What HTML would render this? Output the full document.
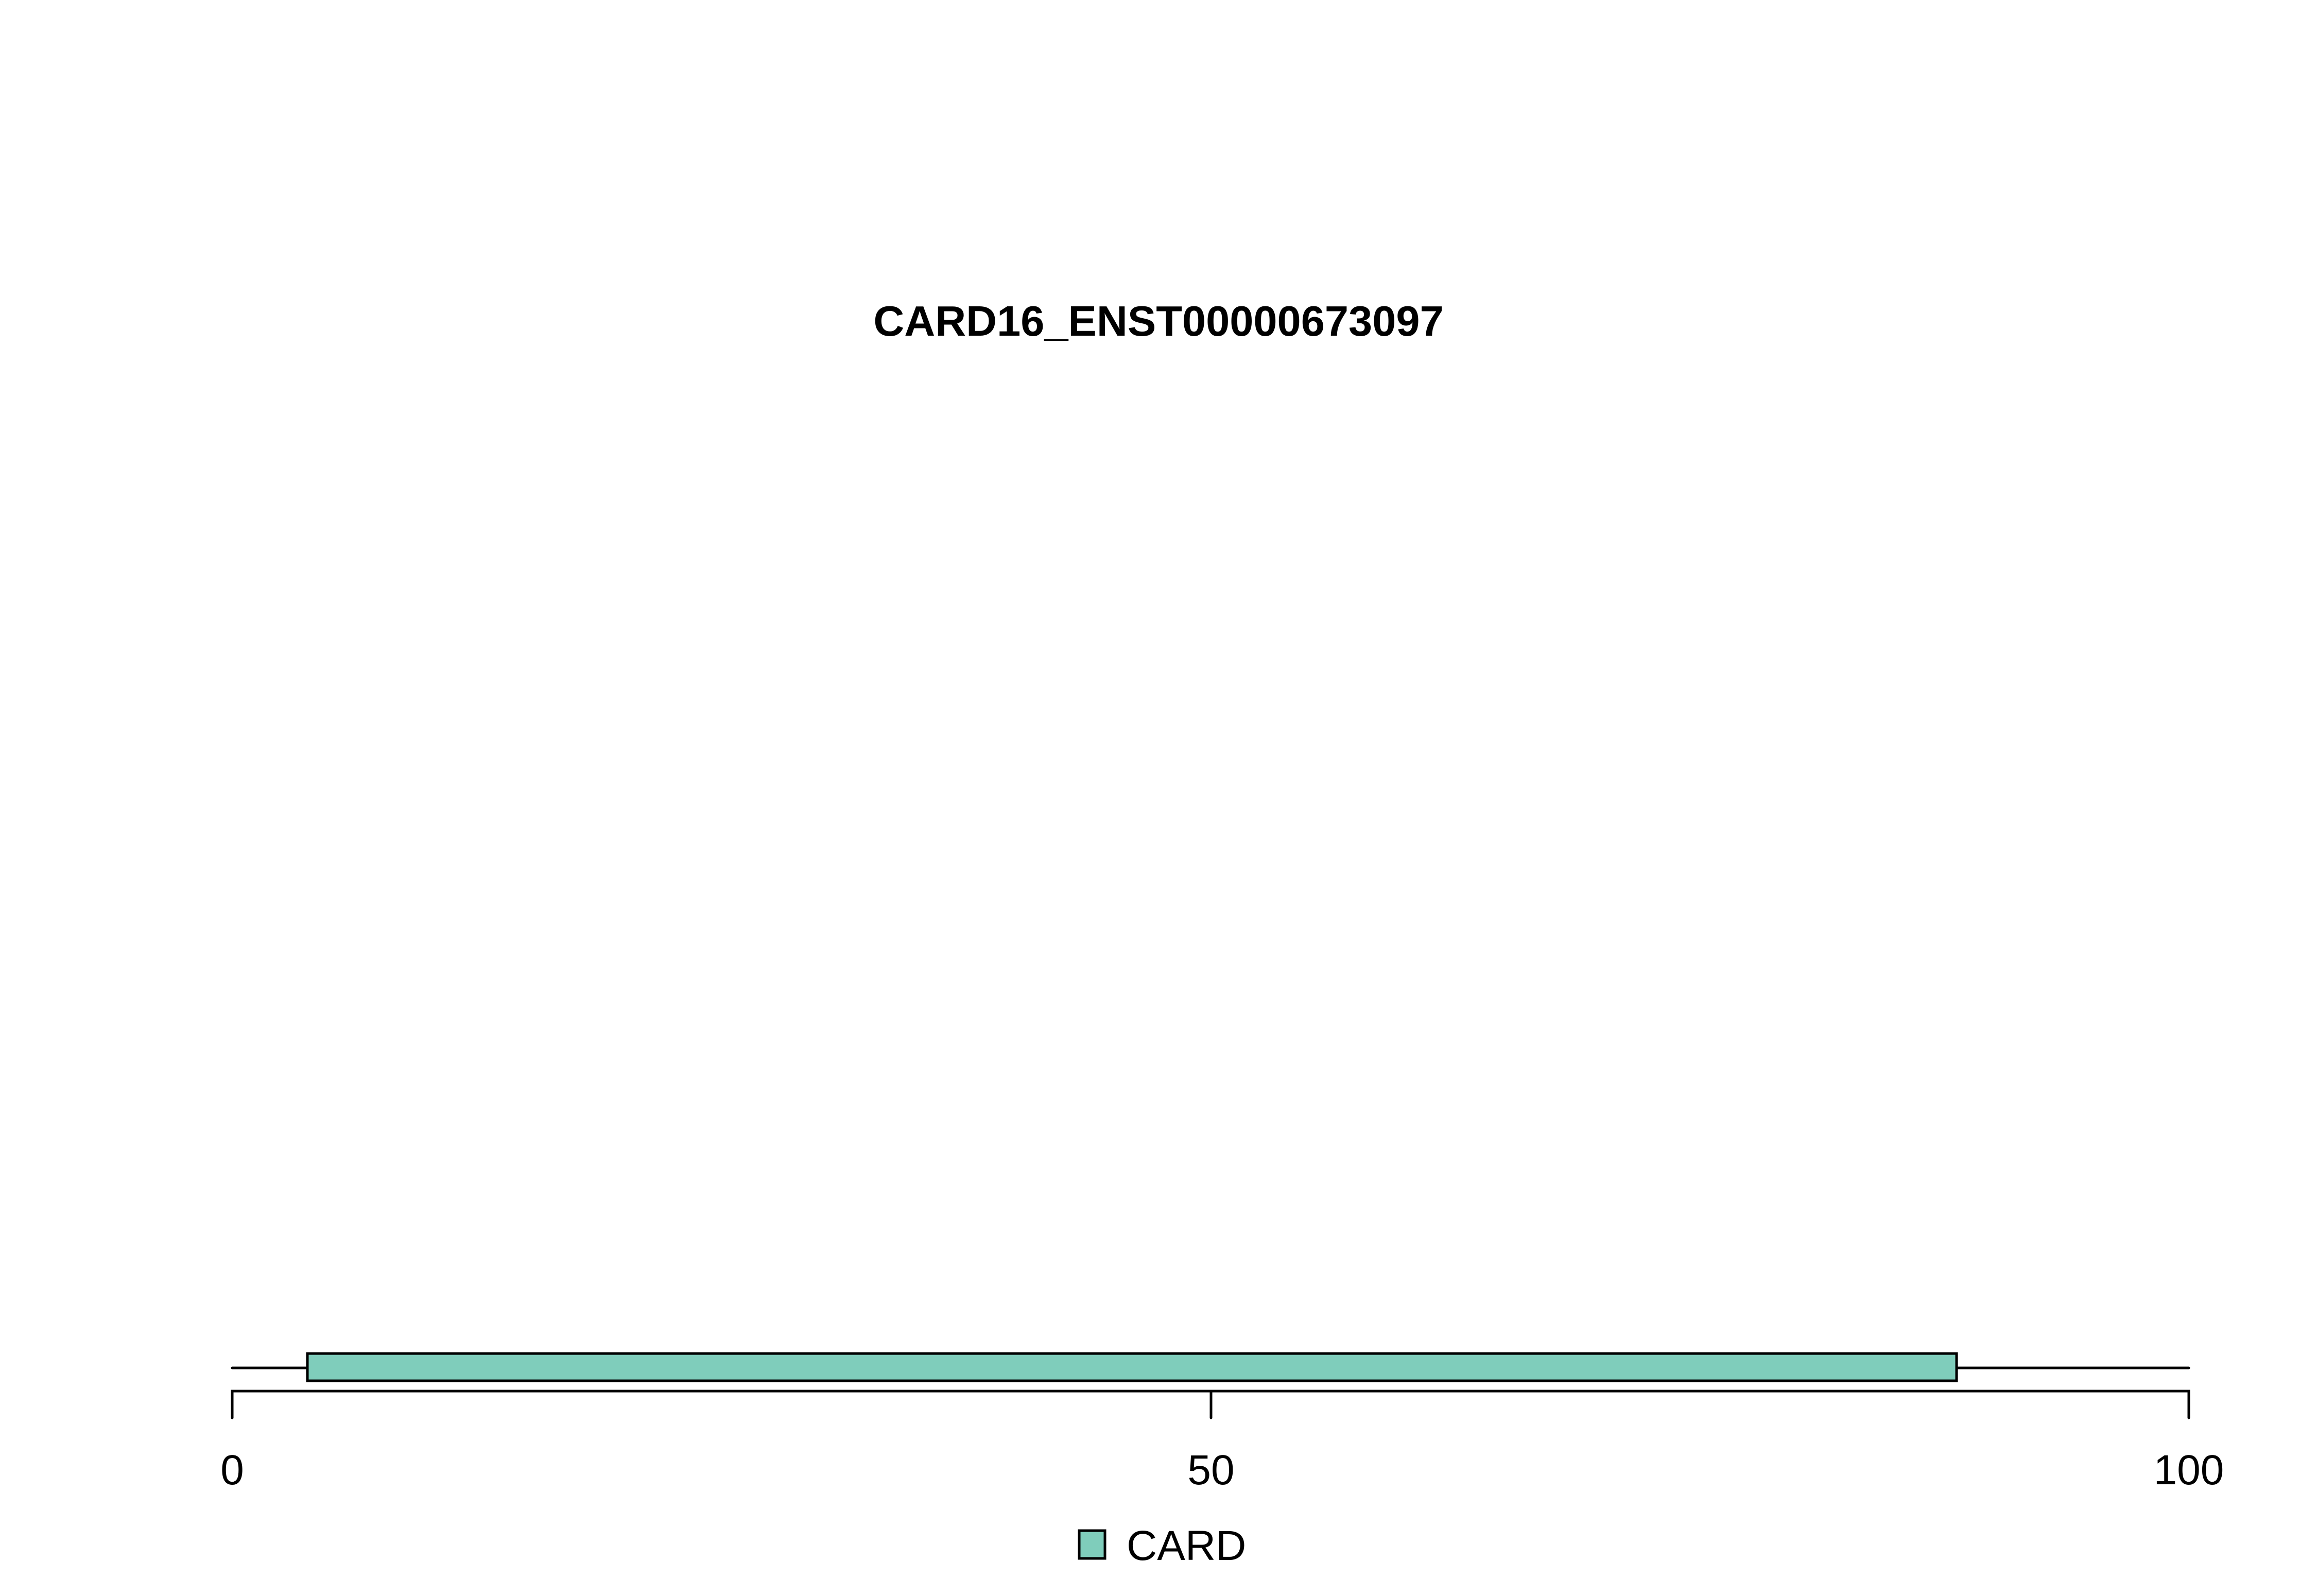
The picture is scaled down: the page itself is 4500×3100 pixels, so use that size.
<!DOCTYPE html>
<html><head><meta charset="utf-8"><style>
html,body{margin:0;padding:0;background:#fff;}
svg{display:block;}
</style></head><body>
<svg width="4500" height="3100" viewBox="0 0 4500 3100" xmlns="http://www.w3.org/2000/svg">
<rect width="4500" height="3100" fill="#fff"/>
<text x="2250" y="652" font-family="Liberation Sans, sans-serif" font-weight="bold" font-size="83" text-anchor="middle" fill="#000">CARD16_ENST00000673097</text>
<line x1="451" y1="2657" x2="4251" y2="2657" stroke="#000" stroke-width="5" stroke-linecap="round"/>
<rect x="597" y="2629" width="3203" height="53" fill="#7fcdbb" stroke="#000" stroke-width="5"/>
<path d="M451 2754 V2702 H4251 V2754 M2352 2702 V2754" fill="none" stroke="#000" stroke-width="5" stroke-linecap="round"/>
<g font-family="Liberation Sans, sans-serif" font-size="82" fill="#000" text-anchor="middle">
<text x="451" y="2883">0</text>
<text x="2352" y="2883">50</text>
<text x="4251" y="2883">100</text>
</g>
<rect x="2096" y="2973" width="50" height="54" fill="#7fcdbb" stroke="#000" stroke-width="5"/>
<text x="2188" y="3030" font-family="Liberation Sans, sans-serif" font-size="82" fill="#000">CARD</text>
</svg>
</body></html>
